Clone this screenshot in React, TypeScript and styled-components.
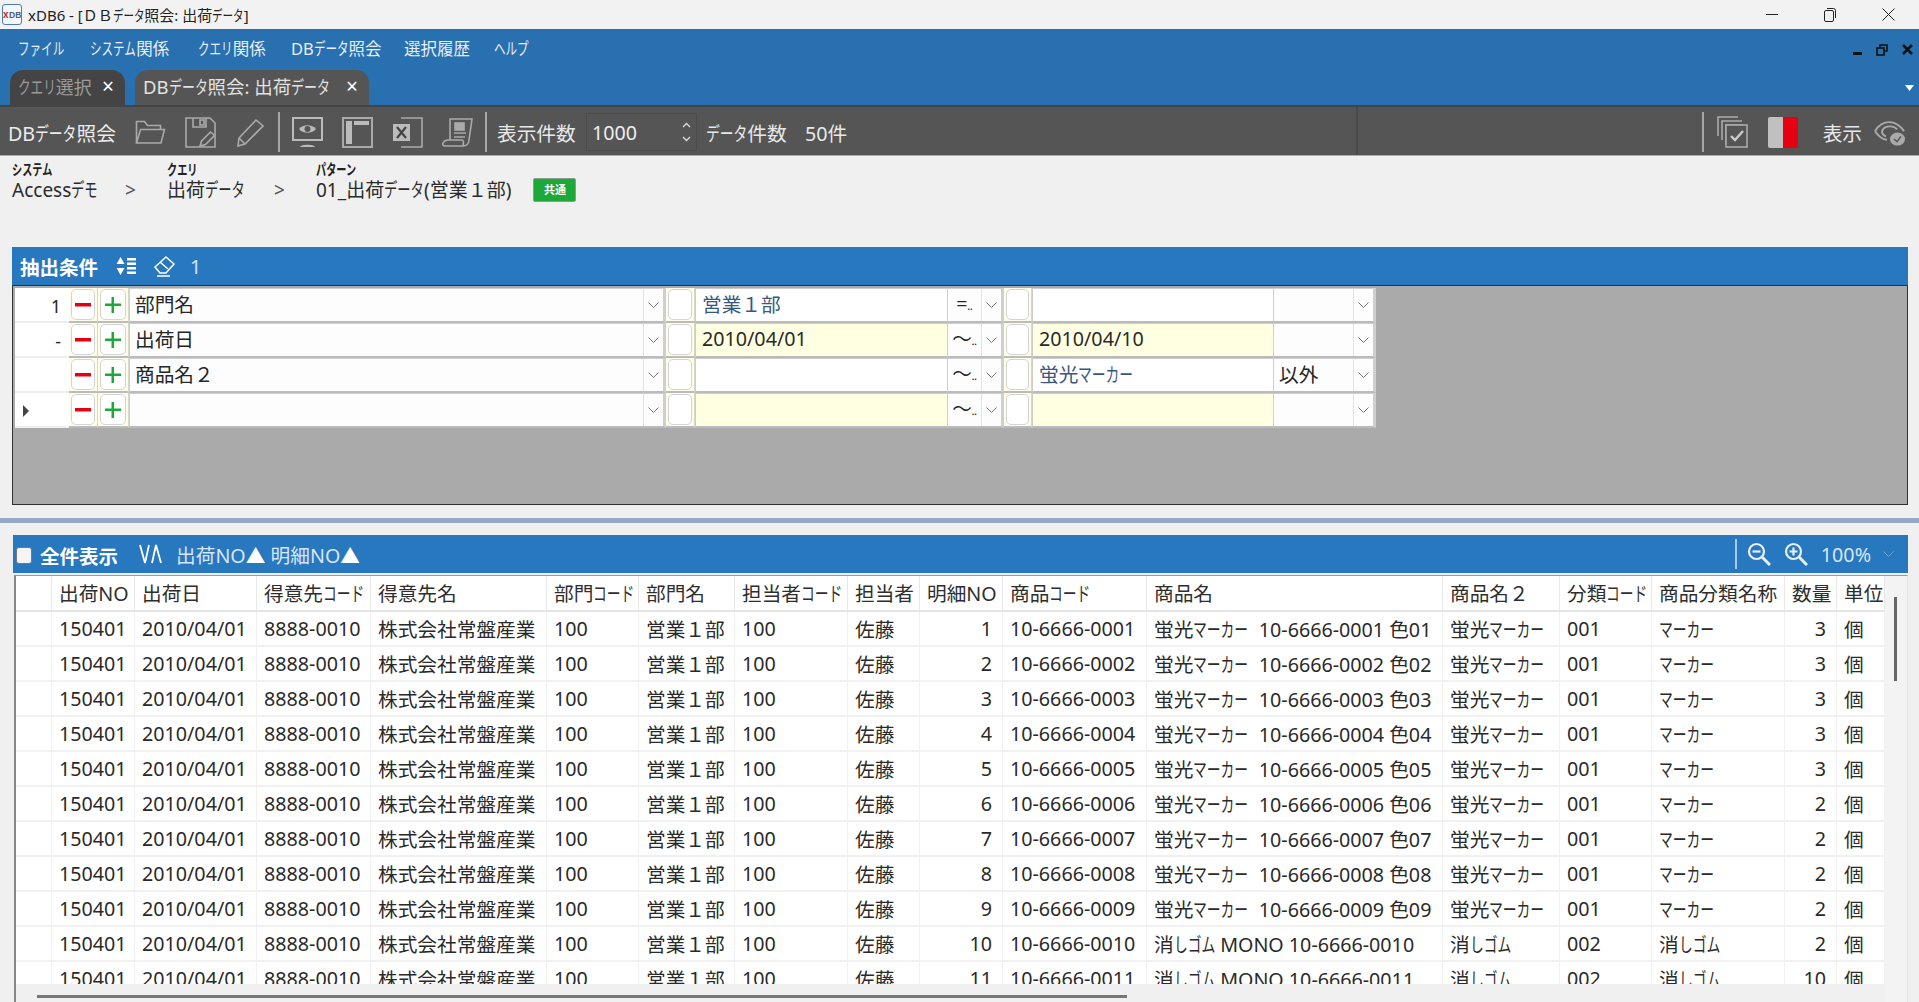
import React from "react";
import styled, { createGlobalStyle } from "styled-components";

const Global = createGlobalStyle`
  html, body { margin: 0; padding: 0; background: #f0f0f0; overflow: hidden; }
  body { font-family: "Noto Sans", "Noto Sans CJK JP", sans-serif; color: #262626; }
  * { box-sizing: border-box; }
`;

const KanaRun = styled.span<{ $n: number }>`
  display: inline-block;
  width: ${(p) => p.$n * 0.7}em;
  white-space: nowrap;
  transform: scaleX(0.7);
  transform-origin: left center;
`;

function J({ children }: { children: string }) {
  const parts = children.split(/([\u3040-\u30FF]+)/);
  return (
    <>
      {parts.map((p, i) =>
        i % 2 === 1 ? (
          <KanaRun key={i} $n={p.length}>
            {p}
          </KanaRun>
        ) : (
          p
        )
      )}
    </>
  );
}

const Page = styled.div`
  width: 1919px;
  height: 1002px;
  display: flex;
  flex-direction: column;
  overflow: hidden;
  background: #f0f0f0;
`;

/* Title bar */
const TitleBar = styled.div`
  height: 29px;
  background: #f2f2f2;
  display: flex;
  align-items: center;
  padding-left: 2px;
`;
const TitleText = styled.span`
  margin-left: 6px;
  font-size: 15px;
  white-space: nowrap;
  color: #222;
`;
const WinButtons = styled.div`
  margin-left: auto;
  display: flex;
  align-items: center;
  padding-right: 24px;
  gap: 46px;
`;

/* Blue header */
const BlueHeader = styled.div`
  background: #2870b0;
  height: 76px;
  display: flex;
  flex-direction: column;
`;
const MenuBar = styled.div`
  height: 41px;
  display: flex;
  align-items: center;
  padding: 0 0 4px 18px;
`;
const MenuItem = styled.span<{ $w: number }>`
  width: ${(p) => p.$w}px;
  color: #e8eef5;
  font-size: 16.5px;
  white-space: nowrap;
`;
const MdiButtons = styled.div`
  margin-left: auto;
  display: flex;
  align-items: center;
  gap: 14px;
  padding: 4px 6px 0 0;
`;
const TabBar = styled.div`
  height: 35px;
  display: flex;
  align-items: flex-end;
  padding-left: 10px;
  gap: 10px;
`;
const Tab = styled.div<{ $active?: boolean; $w: number }>`
  width: ${(p) => p.$w}px;
  height: 35px;
  border-radius: 13px 13px 0 0;
  background: ${(p) => (p.$active ? "#555" : "#444")};
  color: ${(p) => (p.$active ? "#e2e2e2" : "#9a9a9a")};
  font-size: ${(p) => (p.$active ? 18.5 : 18)}px;
  display: flex;
  align-items: center;
  padding: 0 0 3px 8px;
  white-space: nowrap;
`;
const TabClose = styled.span`
  margin-left: auto;
  margin-right: 11px;
  color: #fff;
  font-size: 21px;
  line-height: 20px;
`;
const TabMenu = styled.svg`
  margin: 0 5px 14px auto;
`;

/* Toolbar */
const Toolbar = styled.div`
  height: 51px;
  background: #555;
  border-top: 2px solid #444;
  border-bottom: 1px solid #aaa;
  display: flex;
  align-items: center;
`;
const ToolLeft = styled.div`
  width: 1358px;
  height: 100%;
  border-right: 2px solid #4a4a4a;
  display: flex;
  align-items: center;
  padding: 2px 0 0 8px;
`;
const ToolTitle = styled.span`
  width: 117px;
  color: #ececec;
  font-size: 19.7px;
  white-space: nowrap;
`;
const IconSlot = styled.div`
  width: 50px;
  display: flex;
  justify-content: center;
  align-items: center;
`;
const ToolSep = styled.div<{ $ml?: number }>`
  width: 2px;
  height: 40px;
  margin-left: ${(p) => p.$ml ?? 3}px;
  margin-right: 2px;
  background: #a8a8a8;
`;
const ToolSepGap = styled.span`
  width: 11px;
`;
const ToolLabel = styled.span<{ $ml: number; $w: number }>`
  margin-left: ${(p) => p.$ml}px;
  width: ${(p) => p.$w}px;
  color: #e8e8e8;
  font-size: 19.7px;
  white-space: nowrap;
`;
const CountBox = styled.div`
  margin-left: 9px;
  width: 111px;
  height: 38px;
  border: 1px solid #4b4b4b;
  display: flex;
  align-items: center;
  padding-left: 5px;
  color: #eee;
  font-size: 19.7px;
`;
const Spin = styled.svg`
  margin-left: auto;
  margin-right: 5px;
`;
const ToolRight = styled.div`
  flex: 1;
  display: flex;
  align-items: center;
  justify-content: flex-end;
  padding: 2px 14px 0 0;
`;
const Swatch = styled.div`
  margin-left: 20px;
  width: 30px;
  height: 31px;
  border-radius: 2px;
  background: linear-gradient(90deg, #c0c0c0 50%, #e60012 50%);
`;
const ShowLabel = styled.span`
  margin-left: 25px;
  margin-right: 12px;
  color: #e8e8e8;
  font-size: 19.7px;
`;

/* Breadcrumb */
const Crumbs = styled.div`
  height: 91px;
  background: #f0f0f0;
  display: flex;
  padding: 5px 0 0 12px;
`;
const CrumbCol = styled.div<{ $w: number }>`
  width: ${(p) => p.$w}px;
  display: flex;
  flex-direction: column;
  white-space: nowrap;
`;
const CrumbLabel = styled.span`
  font-size: 14.5px;
  font-weight: 700;
  line-height: 16px;
  color: #222;
`;
const CrumbValue = styled.div`
  font-size: 19px;
  line-height: 26px;
  color: #2b2b2b;
  display: flex;
  align-items: center;
`;
const Chevron = styled.span<{ $ml: number }>`
  margin-left: ${(p) => p.$ml}px;
  color: #555;
  font-size: 19px;
`;
const SharedBadge = styled.span`
  margin-left: 22px;
  width: 43px;
  height: 24px;
  border-radius: 2px;
  border: 1px solid #8aa08f;
  background: #1fa83a;
  color: #fff;
  font-size: 11px;
  font-weight: 700;
  display: flex;
  align-items: center;
  justify-content: center;
`;

/* Condition panel */
const Panel = styled.div`
  margin: 0 11px 0 12px;
`;
const PanelHead = styled.div`
  height: 38px;
  background: #2878c0;
  display: flex;
  align-items: center;
  padding-left: 8px;
  color: #fff;
  font-size: 19.5px;
  font-weight: 700;
`;
const HeadIcon = styled.svg<{ $ml: number }>`
  margin-left: ${(p) => p.$ml}px;
`;
const HeadCount = styled.span`
  margin-left: 15px;
  font-weight: 400;
  font-size: 19.7px;
  color: #d6e6f5;
`;
const CondGrid = styled.div`
  height: 220px;
  background: #aaa;
  border: 1px solid #333;
  padding: 2px 0 0 2px;
`;
const CondRow = styled.div`
  display: grid;
  grid-template-columns: 54px 29px 31px 537px 29px 252px 57px 28px 241px 103px;
  width: 1361px;
  height: 35px;
`;
const RowHead = styled.div`
  height: 35px;
  background: #fff;
  border-bottom: 2px solid #eee;
  display: flex;
  align-items: center;
  justify-content: flex-end;
  padding: 2px 8px 0 8px;
  font-size: 18px;
`;
const Cursor = styled.svg`
  margin-right: auto;
`;
const ButtonCell = styled.div`
  height: 35px;
  background: #fffde8;
  border-bottom: 2px solid #bbb;
  border-right: 1px solid #d8d8c8;
  padding: 1px 2px;
`;
const SquareButton = styled.div`
  height: 31px;
  background: #fff;
  border: 1px solid #d4d4d4;
  border-radius: 5px;
  display: flex;
  align-items: center;
  justify-content: center;
`;
const ValueCell = styled.div<{ $yellow?: boolean; $blue?: boolean }>`
  height: 35px;
  background: ${(p) => (p.$yellow ? "#ffffe2" : "#fff")};
  border-top: 1px solid #ccc;
  border-bottom: 2px solid #bbb;
  border-left: 1px solid #ccc;
  display: flex;
  align-items: center;
  padding: 0 0 3px 6px;
  font-size: 19.7px;
  color: ${(p) => (p.$blue ? "#39587f" : "#2a2a2a")};
  white-space: nowrap;
`;
const SelectCell = styled.div`
  height: 35px;
  background: #fdfdfd;
  border: 1px solid #cfcfcf;
  border-width: 1px 3px 2px 1px;
  border-bottom-color: #bbb;
  display: flex;
  align-items: center;
  font-size: 19.7px;
  white-space: nowrap;
`;
const SelectText = styled.span`
  flex: 1;
  padding: 0 0 3px 5px;
  font-size: 19.7px;
`;
const OpText = styled.span`
  flex: 1;
  display: flex;
  align-items: flex-end;
  justify-content: center;
  padding-bottom: 3px;
  font-size: 19.7px;
  line-height: 24px;
`;
const OpDots = styled.span`
  font-size: 9px;
  line-height: 18px;
  font-weight: 700;
`;
const SelectArrow = styled.div`
  width: 20px;
  height: 100%;
  border-left: 1px solid #e2e2e2;
  display: flex;
  align-items: center;
  justify-content: center;
`;

/* Splitter */
const Splitter = styled.div`
  height: 5px;
  margin: 13px 0 12px;
  background: #93a9c6;
`;

/* Data panel */
const DataHead = styled.div`
  margin: 0 11px 0 13px;
  height: 38px;
  background: #2878c0;
  display: flex;
  align-items: center;
  padding-left: 3px;
  color: #fff;
`;
const AllCheck = styled.span`
  width: 16px;
  height: 17px;
  margin-top: 2px;
  border-radius: 3px;
  background: #f4f4f4;
  border: 1px solid #777;
`;
const AllLabel = styled.span`
  margin: 2px 0 0 8px;
  font-size: 19.5px;
  font-weight: 700;
`;
const SortText = styled.span`
  margin-left: 14px;
  font-size: 19.7px;
  color: #d8e6f4;
  white-space: nowrap;
`;
const SortMark = styled.span`
  color: #fff;
`;
const ZoomGroup = styled.div`
  margin-left: auto;
  display: flex;
  align-items: center;
  padding-right: 14px;
`;
const ZoomSep = styled.div`
  width: 2px;
  height: 30px;
  background: #a9c9e8;
  margin-right: 10px;
`;
const ZoomText = styled.span`
  margin-left: 13px;
  margin-right: 12px;
  font-size: 19.7px;
  color: #d8e6f4;
`;
const DataBody = styled.div`
  flex: 1;
  display: flex;
  margin: 2px 11px 0 14px;
  min-height: 0;
`;
const TableWrap = styled.div`
  width: 1871px;
  border-left: 2px solid #888;
  border-top: 1px solid #999;
  display: flex;
  flex-direction: column;
`;
const TableClip = styled.div`
  height: 409px;
  overflow: hidden;
  background: #fff;
`;
const GridRow = styled.div<{ $head?: boolean }>`
  display: grid;
  grid-template-columns: 36px 83px 122px 114px 176px 92px 96px 113px 72px 83px 144px 296px 117px 92px 133px 52px 48px;
  height: ${(p) => (p.$head ? 36 : 35)}px;
`;
const Cell = styled.div<{ $right?: boolean; $head?: boolean }>`
  height: 100%;
  display: flex;
  align-items: center;
  justify-content: ${(p) => (p.$right ? "flex-end" : "flex-start")};
  padding: ${(p) => (p.$right ? "0 10px 0 0" : p.$head ? "0 0 2px 7px" : "0 0 0 7px")};
  font-size: 19.7px;
  white-space: nowrap;
  overflow: hidden;
  background: #fff;
  color: ${(p) => (p.$head ? "#2e2e2e" : "#2a2a2a")};
  border-right: 1px solid ${(p) => (p.$head ? "#e8e8e8" : "#f1f1f1")};
  border-bottom: 2px solid ${(p) => (p.$head ? "#e4e4e4" : "#f1f1f1")};
`;
const HScrollTrack = styled.div`
  height: 18px;
  padding: 11px 0 0 21px;
  background: #f0f0f0;
`;
const HScrollThumb = styled.div`
  width: 1090px;
  height: 3px;
  background: #777;
`;
const VGutter = styled.div`
  flex: 1;
  background: #f3f3f3;
  border-right: 1px solid #e2e2e2;
  border-top: 1px solid #999;
  padding: 21px 0 0 9px;
`;
const VThumb = styled.div`
  width: 3px;
  height: 84px;
  background: #666;
`;
const ZoomIconSvg = styled.svg<{ $ml?: number }>`
  margin-left: ${(p) => p.$ml ?? 0}px;
`;

/* Icons */
const S = { fill: "none", stroke: "#aaa", strokeWidth: 1.6 };

const Logo = () => (
  <svg width="20" height="21" viewBox="0 0 20 21">
    <rect x="0.5" y="0.5" width="19" height="20" rx="2.5" fill="#f4f6fa" stroke="#4c7fb8" />
    <text x="1" y="14" fontSize="10" fontWeight="700" fill="#d81c1c" fontFamily="Liberation Sans">x</text>
    <text x="7" y="14" fontSize="8.5" fontWeight="700" fill="#4a5f86" fontFamily="Liberation Sans">DB</text>
  </svg>
);
const WinMin = () => (
  <svg width="12" height="12" viewBox="0 0 12 12"><path d="M0 5.500h12" stroke="#222" /></svg>
);
const WinRestore = () => (
  <svg width="12" height="14" viewBox="0 0 12 14">
    <rect x="0.5" y="2.5" width="9" height="11" rx="1.5" fill="none" stroke="#222" />
    <path d="M3 .5h6.500a2 2 0 0 1 2 2V10" fill="none" stroke="#222" />
  </svg>
);
const WinClose = () => (
  <svg width="13" height="13" viewBox="0 0 13 13"><path d="M.5.5l12 12M12.500.5l-12 12" stroke="#222" /></svg>
);
const MdiMin = () => (
  <svg width="9" height="12" viewBox="0 0 9 12"><path d="M0 9.500h9" stroke="#111" strokeWidth="3" /></svg>
);
const MdiRestore = () => (
  <svg width="12" height="12" viewBox="0 0 12 12">
    <rect x="1" y="4" width="7" height="7" fill="none" stroke="#111" strokeWidth="1.6" />
    <path d="M4 4V1h7v6H8" fill="none" stroke="#111" strokeWidth="1.6" />
  </svg>
);
const MdiClose = () => (
  <svg width="11" height="11" viewBox="0 0 11 11"><path d="M1 1l9 9M10 1l-9 9" stroke="#111" strokeWidth="2.6" /></svg>
);
const FolderIcon = () => (
  <svg width="31" height="26" viewBox="0 0 31 26" {...S}>
    <path d="M1.500 24V2.500h8l3 4h13v4" />
    <path d="M1.500 24l4-13.500h24L26 24z" />
  </svg>
);
const SaveIcon = () => (
  <svg width="31" height="31" viewBox="0 0 31 31" {...S}>
    <path d="M1 1h24l5 5v24H1z" />
    <path d="M8 1v9h13V1M15 3h4v5h-4z" />
    <path d="M15 29l1.500-5 9-9 4 3.500-9 9z" fill="#555" />
  </svg>
);
const PencilIcon = () => (
  <svg width="28" height="29" viewBox="0 0 28 29" {...S}>
    <path d="M20 2l7 6L9 26l-7 2 1-8z" />
    <path d="M3 20l6 6" />
  </svg>
);
const MonitorIcon = () => (
  <svg width="31" height="31" viewBox="0 0 31 31">
    <rect x="1" y="1" width="29" height="22" fill="none" stroke="#bbb" strokeWidth="2" />
    <path d="M7 12c4-5 13-5 17 0-4 5-13 5-17 0z" fill="#bbb" />
    <circle cx="15.500" cy="12" r="3" fill="#555" />
    <path d="M8 30c1-3 14-3 15 0z" fill="#bbb" />
  </svg>
);
const LayoutIcon = () => (
  <svg width="31" height="31" viewBox="0 0 31 31">
    <rect x="1" y="1" width="29" height="29" fill="none" stroke="#aaa" strokeWidth="2" />
    <path d="M4 4h6v23H4zM12 4h15v4H12z" fill="#bbb" />
  </svg>
);
const ExcelIcon = () => (
  <svg width="31" height="31" viewBox="0 0 31 31">
    <path d="M9 1h21v29H9" fill="none" stroke="#aaa" strokeWidth="1.600" />
    <rect x="1" y="7" width="17" height="17" fill="#bbb" />
    <path d="M5 10l9 11M14 10l-9 11" stroke="#444" strokeWidth="2.200" />
  </svg>
);
const ScrollIcon = () => (
  <svg width="31" height="31" viewBox="0 0 31 31" {...S}>
    <path d="M8 23V2h22l-3 21c0 4-3 6-6 6H3c-2 0-3-2-2-3 1-2 3-3 5-3h14c1 0 2 1 1 6" />
    <rect x="13" y="6" width="9" height="7" fill="#aaa" />
    <path d="M12 16h12M12 20h11" />
  </svg>
);
const StackIcon = () => (
  <svg width="31" height="32" viewBox="0 0 31 32" {...S}>
    <path d="M1 20V1h20M5 24V5h20M9 28V9h18" />
    <rect x="9" y="9" width="21" height="22" fill="#555" />
    <path d="M14 20l4 4 8-9" stroke="#ccc" strokeWidth="2.400" />
  </svg>
);
const EyeCheckIcon = () => (
  <svg width="31" height="27" viewBox="0 0 31 31" preserveAspectRatio="none" {...S}>
    <path d="M1 14C8 0 22 0 30 14" strokeWidth="2" />
    <path d="M1 14c3 5 6 9 12 10" strokeWidth="2" />
    <path d="M8 14c2-7 12-7 15-2M8 14c0 3 2 5 4 6" strokeWidth="2" />
    <circle cx="23.500" cy="23" r="7.500" fill="#aaa" stroke="none" />
    <path d="M20 23l3 3 4-6" stroke="#555" strokeWidth="1.500" />
  </svg>
);
const SortIcon = () => (
  <HeadIcon $ml={18} width="21" height="18" viewBox="0 0 21 18" fill="#fff">
    <path d="M4.500 0l4 7h-8zM4.500 18l4-7h-8z" />
    <path d="M11 1h9v2.500h-9zM11 5.500h9V8h-9zM11 10h9v2.500h-9zM11 14.500h9V17h-9z" />
  </HeadIcon>
);
const EraserIcon = () => (
  <HeadIcon $ml={16} width="22" height="22" viewBox="0 0 22 22" fill="none" stroke="#fff" strokeWidth="1.500">
    <path d="M13 2l8 7-8 9H7l-5-6z" />
    <path d="M7 7l8 7M4 21h13" />
  </HeadIcon>
);
const MinusMark = () => (
  <svg width="16" height="4" viewBox="0 0 16 4"><path d="M0 0h16v3.500H0z" fill="#e60012" /></svg>
);
const PlusMark = () => (
  <svg width="16" height="16" viewBox="0 0 16 16"><path d="M6.500 0H9v6.500h7V9H9v7H6.500V9H0V6.500h6.500z" fill="#1fa83a" /></svg>
);
const ChevDown = ({ color = "#777" }: { color?: string }) => (
  <svg width="11" height="7" viewBox="0 0 11 7"><path d="M.5.5l5 5 5-5" fill="none" stroke={color} /></svg>
);
const VLambda = () => (
  <HeadIcon $ml={21} width="23" height="20" viewBox="0 0 23 20" fill="none" stroke="#fff" strokeWidth="1.800">
    <path d="M1 1l5 18 4-18M13 19l4-18 5 18" />
  </HeadIcon>
);
const ZoomOutIcon = () => (
  <ZoomIconSvg width="24" height="24" viewBox="0 0 24 24" fill="none" stroke="#e8f0f8">
    <circle cx="9.500" cy="9.500" r="7.500" strokeWidth="2.200" />
    <path d="M15 15l8 8" strokeWidth="3" />
    <path d="M5.500 9.500h8" strokeWidth="2.200" />
  </ZoomIconSvg>
);
const ZoomInIcon = () => (
  <ZoomIconSvg $ml={13} width="24" height="24" viewBox="0 0 24 24" fill="none" stroke="#e8f0f8">
    <circle cx="9.500" cy="9.500" r="7.500" strokeWidth="2.200" />
    <path d="M15 15l8 8" strokeWidth="3" />
    <path d="M5.500 9.500h8M9.500 5.500v8" strokeWidth="2.200" />
  </ZoomIconSvg>
);

/* Data */
const conds = [
  { no: "1", field: "部門名", v1: "営業１部", op: "=", v2: "", neg: "", yellow: false },
  { no: "-", field: "出荷日", v1: "2010/04/01", op: "～", v2: "2010/04/10", neg: "", yellow: true },
  { no: "", field: "商品名２", v1: "", op: "～", v2: "蛍光マーカー", neg: "以外", yellow: false },
  { no: "", field: "", v1: "", op: "～", v2: "", neg: "", yellow: true, cursor: true },
];

const heads = [
  "", "出荷NO", "出荷日", "得意先コード", "得意先名", "部門コード", "部門名", "担当者コード", "担当者",
  "明細NO", "商品コード", "商品名", "商品名２", "分類コード", "商品分類名称", "数量", "単位",
];

const qty = [3, 3, 3, 3, 3, 2, 2, 2, 2, 2, 10];
const rows = qty.map((q, i) => {
  const n = i + 1;
  const code = `10-6666-${String(n).padStart(4, "0")}`;
  const marker = n <= 9;
  return [
    "", "150401", "2010/04/01", "8888-0010", "株式会社常盤産業", "100", "営業１部", "100", "佐藤", String(n), code,
    marker ? `蛍光マーカー  ${code} 色0${n}` : `消しゴム MONO ${code}`,
    marker ? "蛍光マーカー" : "消しゴム",
    marker ? "001" : "002",
    marker ? "マーカー" : "消しゴム",
    String(q),
    "個",
  ];
});

const Mono = styled.span`
  white-space: pre;
`;

export default function App() {
  return (
    <Page>
      <Global />
      <TitleBar>
        <Logo />
        <TitleText><J>xDB6 - [ＤＢデータ照会: 出荷データ]</J></TitleText>
        <WinButtons>
          <WinMin />
          <WinRestore />
          <WinClose />
        </WinButtons>
      </TitleBar>

      <BlueHeader>
        <MenuBar>
          <MenuItem $w={72}><J>ファイル</J></MenuItem>
          <MenuItem $w={108}><J>システム関係</J></MenuItem>
          <MenuItem $w={93}><J>クエリ関係</J></MenuItem>
          <MenuItem $w={113}><J>DBデータ照会</J></MenuItem>
          <MenuItem $w={90}>選択履歴</MenuItem>
          <MenuItem $w={60}><J>ヘルプ</J></MenuItem>
          <MdiButtons>
            <MdiMin />
            <MdiRestore />
            <MdiClose />
          </MdiButtons>
        </MenuBar>
        <TabBar>
          <Tab $w={115}>
            <J>クエリ選択</J>
            <TabClose>×</TabClose>
          </Tab>
          <Tab $active $w={234}>
            <J>DBデータ照会: 出荷データ</J>
            <TabClose>×</TabClose>
          </Tab>
          <TabMenu width="9" height="6" viewBox="0 0 9 6"><path d="M0 0h9L4.500 6z" fill="#fff" /></TabMenu>
        </TabBar>
      </BlueHeader>

      <Toolbar>
        <ToolLeft>
          <ToolTitle><J>DBデータ照会</J></ToolTitle>
          <IconSlot><FolderIcon /></IconSlot>
          <IconSlot><SaveIcon /></IconSlot>
          <IconSlot><PencilIcon /></IconSlot>
          <ToolSep />
          <IconSlot><MonitorIcon /></IconSlot>
          <IconSlot><LayoutIcon /></IconSlot>
          <IconSlot><ExcelIcon /></IconSlot>
          <IconSlot><ScrollIcon /></IconSlot>
          <ToolSep />
          <ToolLabel $ml={8} $w={80}>表示件数</ToolLabel>
          <CountBox>
            1000
            <Spin width="9" height="22" viewBox="0 0 9 22" fill="none" stroke="#ddd" strokeWidth="1.300">
              <path d="M1 6l3.500-3.500L8 6M1 16l3.500 3.500L8 16" />
            </Spin>
          </CountBox>
          <ToolLabel $ml={9} $w={99}><J>データ件数</J></ToolLabel>
          <ToolLabel $ml={0} $w={60}>50件</ToolLabel>
        </ToolLeft>
        <ToolRight>
          <ToolSep />
          <ToolSepGap />
          <StackIcon />
          <Swatch />
          <ShowLabel>表示</ShowLabel>
          <EyeCheckIcon />
        </ToolRight>
      </Toolbar>

      <Crumbs>
        <CrumbCol $w={155}>
          <CrumbLabel><J>システム</J></CrumbLabel>
          <CrumbValue><J>Accessデモ</J><Chevron $ml={27}>&gt;</Chevron></CrumbValue>
        </CrumbCol>
        <CrumbCol $w={149}>
          <CrumbLabel><J>クエリ</J></CrumbLabel>
          <CrumbValue><J>出荷データ</J><Chevron $ml={29}>&gt;</Chevron></CrumbValue>
        </CrumbCol>
        <CrumbCol $w={300}>
          <CrumbLabel><J>パターン</J></CrumbLabel>
          <CrumbValue>
            <J>01_出荷データ(営業１部)</J>
            <SharedBadge>共通</SharedBadge>
          </CrumbValue>
        </CrumbCol>
      </Crumbs>

      <Panel>
        <PanelHead>
          抽出条件
          <SortIcon />
          <EraserIcon />
          <HeadCount>1</HeadCount>
        </PanelHead>
        <CondGrid>
          {conds.map((c, i) => (
            <CondRow key={i}>
              <RowHead>
                {c.cursor && (
                  <Cursor width="6" height="12" viewBox="0 0 6 12"><path d="M0 0l6 6-6 6z" fill="#444" /></Cursor>
                )}
                {c.no}
              </RowHead>
              <ButtonCell><SquareButton><MinusMark /></SquareButton></ButtonCell>
              <ButtonCell><SquareButton><PlusMark /></SquareButton></ButtonCell>
              <SelectCell>
                <SelectText><J>{c.field}</J></SelectText>
                <SelectArrow><ChevDown /></SelectArrow>
              </SelectCell>
              <ButtonCell><SquareButton /></ButtonCell>
              <ValueCell $yellow={c.yellow} $blue={c.v1 === "営業１部"}>{c.v1}</ValueCell>
              <SelectCell>
                <OpText>{c.op}<OpDots>..</OpDots></OpText>
                <SelectArrow><ChevDown /></SelectArrow>
              </SelectCell>
              <ButtonCell><SquareButton /></ButtonCell>
              <ValueCell $yellow={c.yellow} $blue={c.v2 === "蛍光マーカー"}><J>{c.v2}</J></ValueCell>
              <SelectCell>
                <SelectText>{c.neg}</SelectText>
                <SelectArrow><ChevDown /></SelectArrow>
              </SelectCell>
            </CondRow>
          ))}
        </CondGrid>
      </Panel>

      <Splitter />

      <DataHead>
        <AllCheck />
        <AllLabel>全件表示</AllLabel>
        <VLambda />
        <SortText>出荷NO<SortMark>▲</SortMark> 明細NO<SortMark>▲</SortMark></SortText>
        <ZoomGroup>
          <ZoomSep />
          <ZoomOutIcon />
          <ZoomInIcon />
          <ZoomText>100%</ZoomText>
          <ChevDown color="#6ea3d3" />
        </ZoomGroup>
      </DataHead>

      <DataBody>
        <TableWrap>
          <TableClip>
            <GridRow $head>
              {heads.map((h, i) => (
                <Cell key={i} $head><J>{h}</J></Cell>
              ))}
            </GridRow>
            {rows.map((r, i) => (
              <GridRow key={i}>
                {r.map((v, j) => (
                  <Cell key={j} $right={j === 9 || j === 15}>
                    <Mono><J>{v}</J></Mono>
                  </Cell>
                ))}
              </GridRow>
            ))}
          </TableClip>
          <HScrollTrack><HScrollThumb /></HScrollTrack>
        </TableWrap>
        <VGutter><VThumb /></VGutter>
      </DataBody>
    </Page>
  );
}
